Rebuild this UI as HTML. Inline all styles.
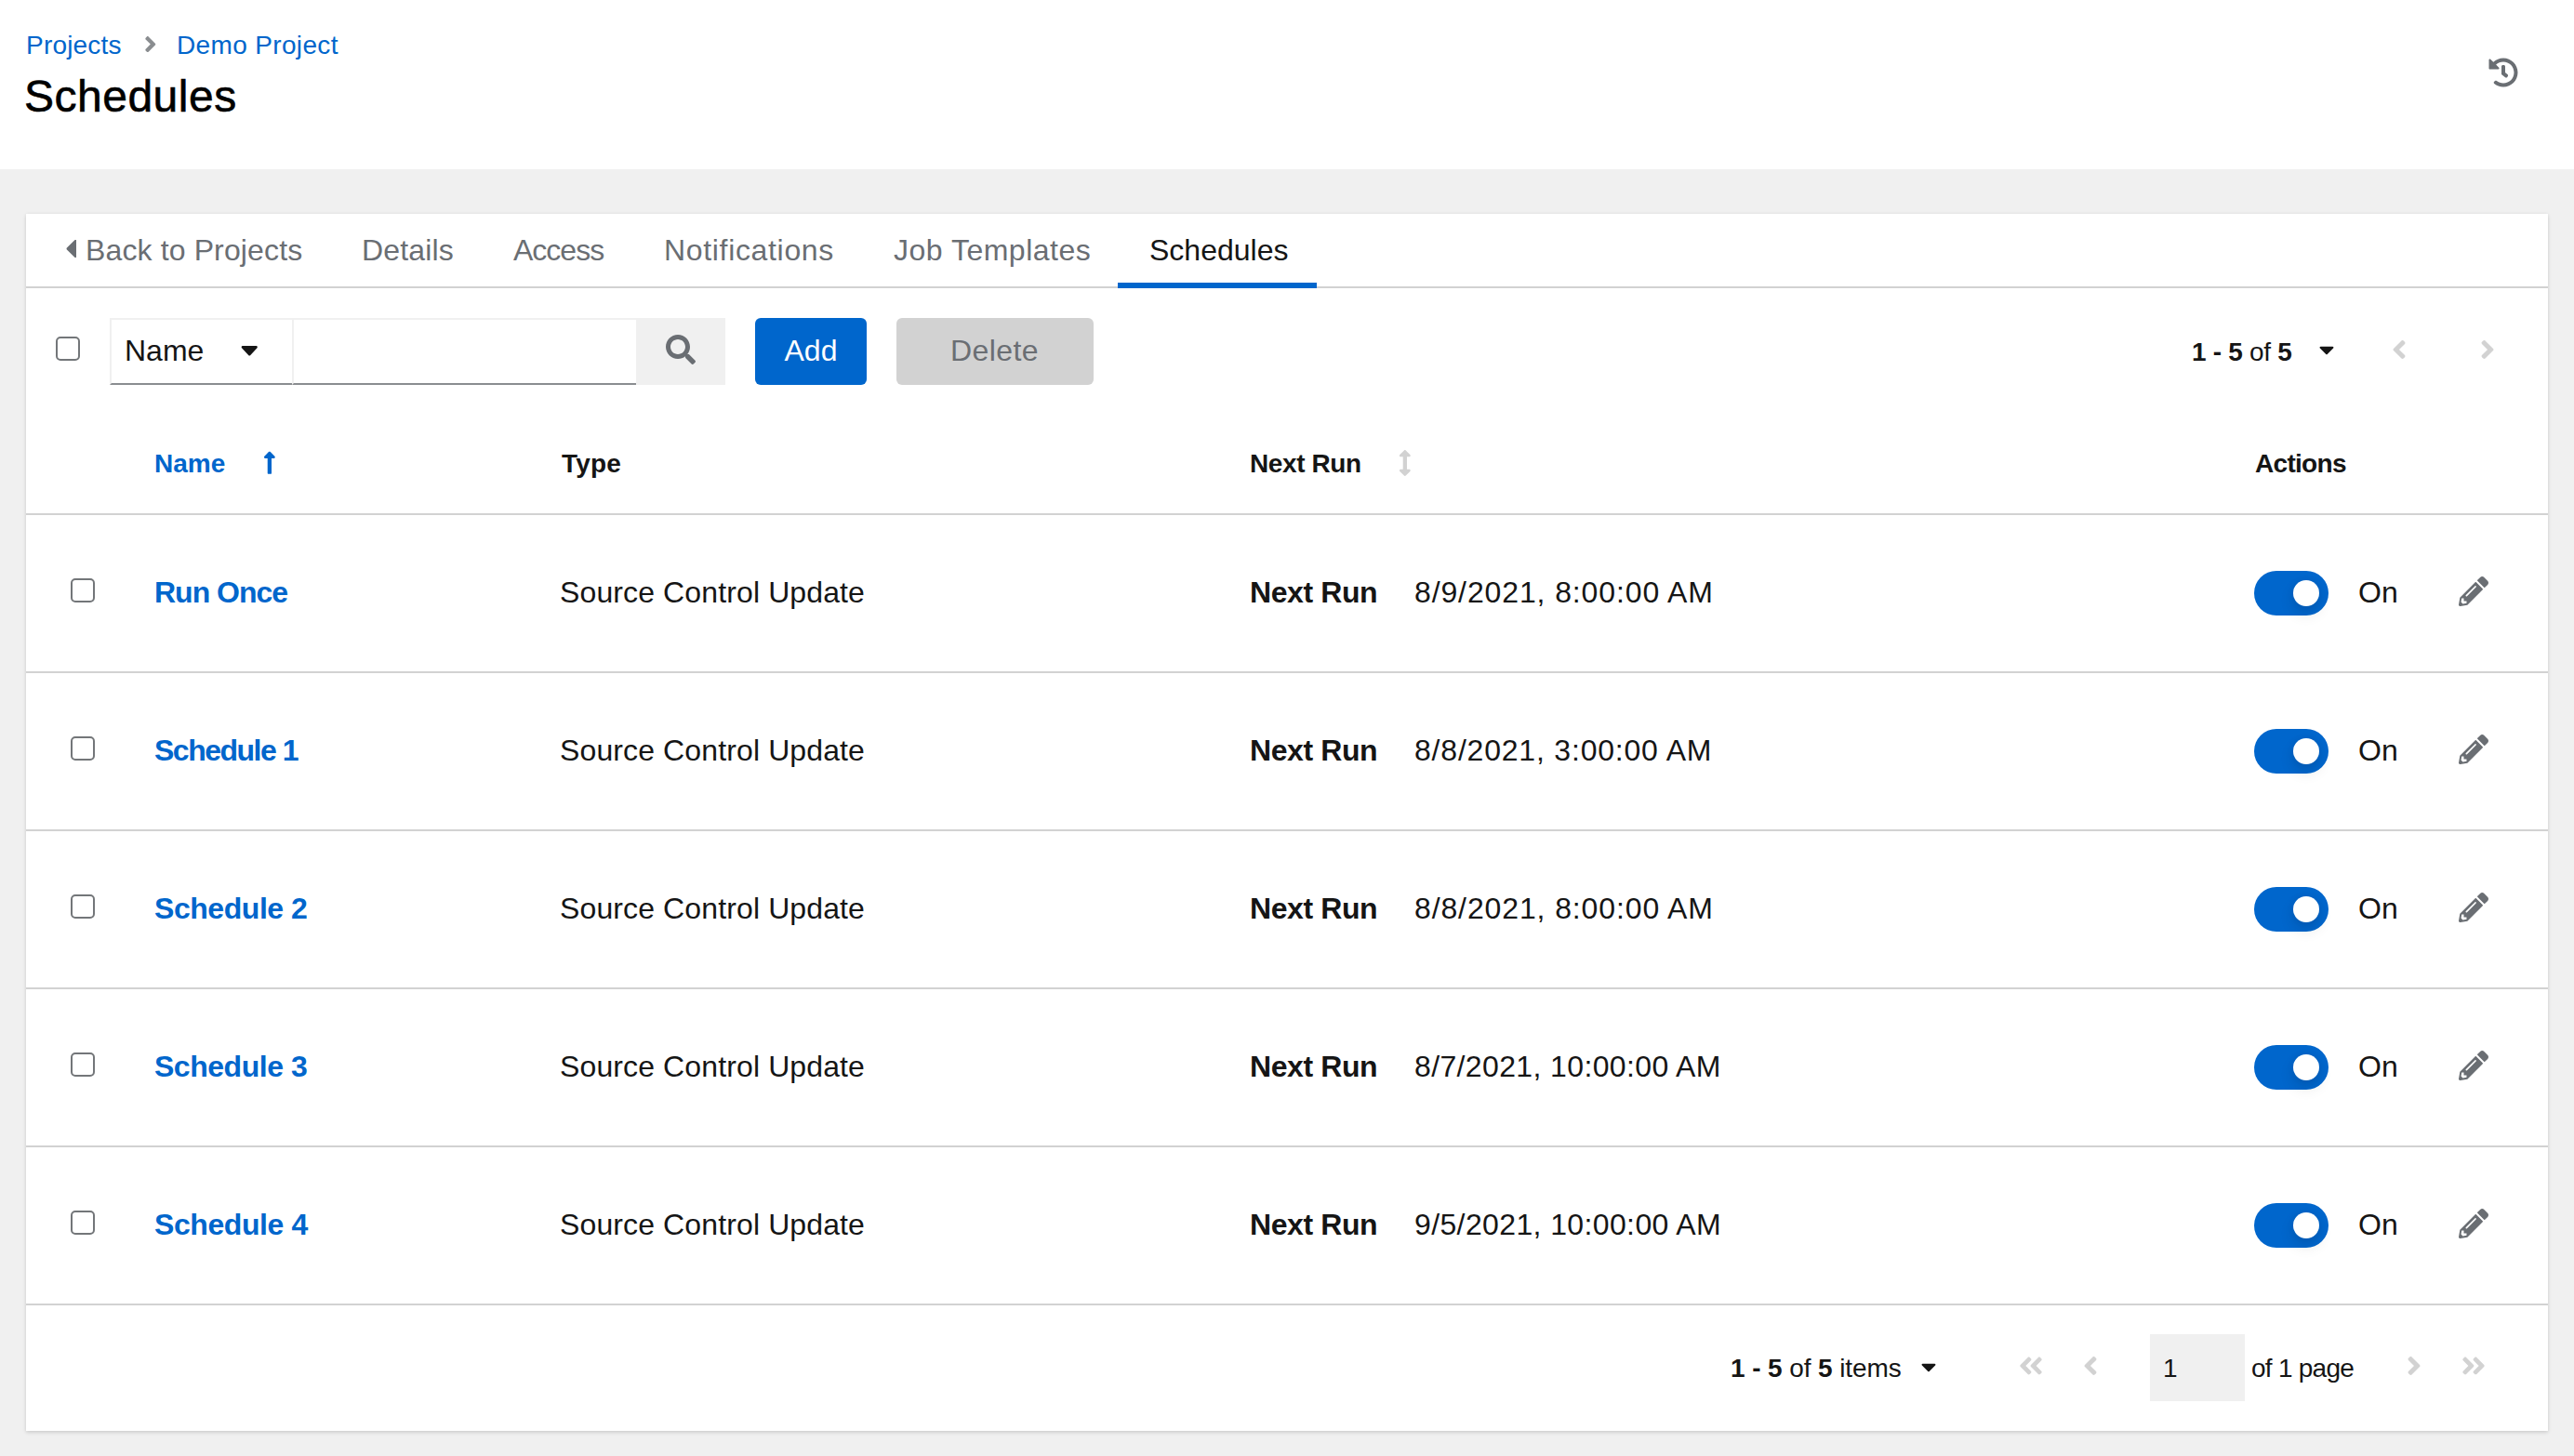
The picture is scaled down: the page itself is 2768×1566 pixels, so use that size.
<!DOCTYPE html>
<html>
<head>
<meta charset="utf-8">
<style>
html,body{margin:0;padding:0;}
body{width:2768px;height:1566px;overflow:hidden;background:#f0f0f0;position:relative;font-family:"Liberation Sans",sans-serif;color:#151515;}
.a{position:absolute;}
.t{position:absolute;white-space:nowrap;line-height:1;}
.s28{font-size:28px;}
.s32{font-size:32px;}
.b{font-weight:700;}
.blue{color:#0066cc;}
.gray{color:#6a6e73;}
svg{position:absolute;display:block;}
#hdr{left:0;top:0;width:2768px;height:182px;background:#fff;}
#card{left:28px;top:230px;width:2712px;height:1309px;background:#fff;box-shadow:0 2px 4px 0 rgba(3,3,3,.12),0 0 4px 0 rgba(3,3,3,.06);}
.hl{position:absolute;left:28px;width:2712px;height:2px;background:#d2d2d2;}
.cb{position:absolute;width:22px;height:22px;border:2px solid #737679;border-radius:5px;background:#fff;}
.tog{position:absolute;width:80px;height:48px;border-radius:24px;background:#0066cc;}
.tog::after{content:"";position:absolute;left:42px;top:10px;width:28px;height:28px;border-radius:50%;background:#fff;box-shadow:0 8px 16px 0 rgba(3,3,3,.12),0 0 8px 0 rgba(3,3,3,.06);}
</style>
</head>
<body>
<div id="hdr" class="a"></div>

<!-- breadcrumb -->
<div class="t s28 blue" style="left:28px;top:34.5px;letter-spacing:0.2px;">Projects</div>
<svg style="left:155px;top:34px;" width="13.6" height="27.2" viewBox="0 0 256 512"><path fill="#8a8d90" d="M224.3 273l-136 136c-9.4 9.4-24.6 9.4-33.9 0l-22.6-22.6c-9.4-9.4-9.4-24.6 0-33.9l96.4-96.4-96.4-96.4c-9.4-9.4-9.4-24.6 0-33.9L54.3 103c9.4-9.4 24.6-9.4 33.9 0l136 136c9.5 9.4 9.5 24.6.1 34z"/></svg>
<div class="t s28 blue" style="left:190px;top:34.5px;letter-spacing:0.35px;">Demo Project</div>
<div class="t" style="left:26px;top:80px;font-size:48px;letter-spacing:0.5px;color:#000;-webkit-text-stroke:0.6px #000;">Schedules</div>

<!-- history icon -->
<svg style="left:2676px;top:62px;" width="32" height="32" viewBox="0 0 512 512"><path fill="#6a6e73" d="M504 255.531c.253 136.64-111.18 248.372-247.82 248.468-59.015.042-113.223-20.53-155.822-54.911-11.077-8.94-11.905-25.541-1.839-35.607l11.267-11.267c8.609-8.609 22.353-9.551 31.891-1.984C173.062 425.135 212.781 440 256 440c101.705 0 184-82.311 184-184 0-101.705-82.311-184-184-184-48.814 0-93.149 18.969-126.068 49.932l50.754 50.754c10.08 10.08 2.941 27.314-11.313 27.314H24c-8.837 0-16-7.163-16-16V38.627c0-14.254 17.234-21.393 27.314-11.314l49.372 49.372C129.209 34.136 189.552 8 256 8c136.81 0 247.747 110.78 248 247.531zm-180.912 78.784l9.823-12.63c8.138-10.463 6.253-25.542-4.21-33.679L288 256.349V152c0-13.255-10.745-24-24-24h-16c-13.255 0-24 10.745-24 24v135.651l65.409 50.874c10.463 8.137 25.541 6.253 33.679-4.21z"/></svg>

<div id="card" class="a"></div>

<!-- tabs -->
<svg style="left:69.5px;top:251.3px;" width="12.5" height="33" viewBox="0 0 192 512" preserveAspectRatio="none"><path fill="#6a6e73" d="M192 127.338v257.324c0 17.818-21.543 26.741-34.142 14.142L29.196 270.142c-7.81-7.81-7.81-20.474 0-28.284l128.662-128.662c12.599-12.6 34.142-3.676 34.142 14.142z"/></svg>
<div class="t s32 gray" style="left:92px;top:253px;letter-spacing:0.13px;">Back to Projects</div>
<div class="t s32 gray" style="left:389px;top:253px;letter-spacing:0.15px;">Details</div>
<div class="t s32 gray" style="left:552px;top:253px;letter-spacing:-1px;">Access</div>
<div class="t s32 gray" style="left:714px;top:253px;letter-spacing:0.67px;">Notifications</div>
<div class="t s32 gray" style="left:961px;top:253px;letter-spacing:0.5px;">Job Templates</div>
<div class="t s32" style="left:1236px;top:253px;">Schedules</div>
<div class="hl" style="top:308px;"></div>
<div class="a" style="left:1202px;top:304px;width:214px;height:6px;background:#0066cc;"></div>

<!-- toolbar -->
<div class="cb" style="left:60px;top:362px;"></div>
<div class="a" style="left:118px;top:342px;width:196px;height:70px;border-top:2px solid #f0f0f0;border-left:2px solid #f0f0f0;border-bottom:2px solid #8a8d90;box-sizing:border-box;height:72px;"></div>
<div class="a" style="left:314px;top:342px;width:370px;height:72px;border-top:2px solid #f0f0f0;border-left:2px solid #f0f0f0;border-bottom:2px solid #8a8d90;box-sizing:border-box;"></div>
<div class="t s32" style="left:134px;top:361px;">Name</div>
<svg style="left:259px;top:360px;" width="18.5" height="32" preserveAspectRatio="none" viewBox="0 0 320 512"><path fill="#151515" d="M31.3 192h257.3c17.8 0 26.7 21.5 14.1 34.1L174.1 354.8c-7.8 7.8-20.5 7.8-28.3 0L17.2 226.1C4.6 213.5 13.5 192 31.3 192z"/></svg>
<div class="a" style="left:684px;top:342px;width:96px;height:72px;background:#f0f0f0;"></div>
<svg style="left:716px;top:360px;" width="32" height="32" viewBox="0 0 512 512"><path fill="#6a6e73" d="M505 442.7L405.3 343c-4.5-4.5-10.6-7-17-7H372c27.6-35.3 44-79.7 44-128C416 93.1 322.9 0 208 0S0 93.1 0 208s93.1 208 208 208c48.3 0 92.7-16.4 128-44v16.3c0 6.4 2.5 12.5 7 17l99.7 99.7c9.4 9.4 24.6 9.4 33.9 0l28.3-28.3c9.4-9.4 9.4-24.6.1-34zM208 336c-70.7 0-128-57.2-128-128 0-70.7 57.2-128 128-128 70.7 0 128 57.2 128 128 0 70.7-57.2 128-128 128z"/></svg>
<div class="a" style="left:812px;top:342px;width:120px;height:72px;background:#0066cc;border-radius:6px;"></div>
<div class="t s32" style="left:843.5px;top:361px;color:#fff;">Add</div>
<div class="a" style="left:964px;top:342px;width:212px;height:72px;background:#d2d2d2;border-radius:6px;"></div>
<div class="t s32 gray" style="left:1022px;top:361px;letter-spacing:0.4px;">Delete</div>

<!-- top pagination -->
<div class="t s28" style="left:2357px;top:365px;letter-spacing:-0.3px;"><span class="b">1 - 5</span> of <span class="b">5</span></div>
<svg style="left:2494px;top:363px;" width="16" height="26" viewBox="0 0 320 512"><path fill="#151515" d="M31.3 192h257.3c17.8 0 26.7 21.5 14.1 34.1L174.1 354.8c-7.8 7.8-20.5 7.8-28.3 0L17.2 226.1C4.6 213.5 13.5 192 31.3 192z"/></svg>
<svg style="left:2571.5px;top:360px;" width="16" height="32" viewBox="0 0 256 512"><path fill="#d2d2d2" d="M31.7 239l136-136c9.4-9.4 24.6-9.4 33.9 0l22.6 22.6c9.4 9.4 9.4 24.6 0 33.9L127.9 256l96.4 96.4c9.4 9.4 9.4 24.6 0 33.9L201.7 409c-9.4 9.4-24.6 9.4-33.9 0l-136-136c-9.5-9.4-9.5-24.6-.1-34z"/></svg>
<svg style="left:2667.3px;top:360px;" width="16" height="32" viewBox="0 0 256 512"><path fill="#d2d2d2" d="M224.3 273l-136 136c-9.4 9.4-24.6 9.4-33.9 0l-22.6-22.6c-9.4-9.4-9.4-24.6 0-33.9l96.4-96.4-96.4-96.4c-9.4-9.4-9.4-24.6 0-33.9L54.3 103c9.4-9.4 24.6-9.4 33.9 0l136 136c9.5 9.4 9.5 24.6.1 34z"/></svg>

<!-- table header -->
<div class="t s28 b blue" style="left:166px;top:485px;">Name</div>
<svg style="left:283.1px;top:484.3px;" width="13.75" height="27.4" viewBox="0 0 256 512" preserveAspectRatio="none"><path fill="#0066cc" d="M88 166.059V468c0 6.627 5.373 12 12 12h56c6.627 0 12-5.373 12-12V166.059h46.059c21.382 0 32.09-25.851 16.971-40.971l-86.059-86.059c-9.373-9.373-24.569-9.373-33.941 0l-86.059 86.059c-15.119 15.119-4.411 40.971 16.971 40.971H88z"/></svg>
<div class="t s28 b" style="left:604px;top:485px;letter-spacing:0.2px;">Type</div>
<div class="t s28 b" style="left:1344px;top:485px;letter-spacing:-0.4px;">Next Run</div>
<svg style="left:1503.7px;top:484px;" width="13.7" height="28" viewBox="0 0 256 512" preserveAspectRatio="none"><path fill="#d2d2d2" d="M214.059 377.941H168V134.059h46.059c21.382 0 32.09-25.851 16.971-40.971L144.971 7.029c-9.373-9.373-24.568-9.373-33.941 0L24.971 93.088c-15.119 15.119-4.411 40.971 16.971 40.971H88v243.882H41.941c-21.382 0-32.09 25.851-16.971 40.971l86.059 86.059c9.373 9.373 24.568 9.373 33.941 0l86.059-86.059c15.12-15.119 4.412-40.971-16.97-40.971z"/></svg>
<div class="t s28 b" style="left:2425px;top:485px;letter-spacing:-0.7px;">Actions</div>
<div class="hl" style="top:552px;"></div>

<!-- ROWS -->
<div class="cb" style="left:76px;top:622px;"></div>
<div class="t s32 b blue" style="left:166px;top:621px;letter-spacing:-1px;">Run Once</div>
<div class="t s32" style="left:602px;top:621px;letter-spacing:0.12px;">Source Control Update</div>
<div class="t s32 b" style="left:1344px;top:621px;letter-spacing:-0.4px;">Next Run</div>
<div class="t s32" style="left:1521px;top:621px;letter-spacing:0.88px;">8/9/2021, 8:00:00 AM</div>
<div class="tog" style="left:2424px;top:614px;"></div>
<div class="t s32" style="left:2536px;top:621px;">On</div>
<svg style="left:2644px;top:620px;" width="32" height="32" viewBox="0 0 512 512"><path fill="#6a6e73" d="M497.9 142.1l-46.1 46.1c-4.7 4.7-12.3 4.7-17 0l-111-111c-4.7-4.7-4.7-12.3 0-17l46.1-46.1c18.7-18.7 49.1-18.7 67.9 0l60.1 60.1c18.8 18.7 18.8 49.1 0 67.9zM284.2 99.8L21.6 362.4.4 483.9c-2.9 16.4 11.4 30.6 27.8 27.8l121.5-21.3 262.6-262.6c4.7-4.7 4.7-12.3 0-17l-111-111c-4.8-4.7-12.4-4.7-17.1 0zM124.1 339.9c-5.5-5.5-5.5-14.3 0-19.8l154-154c5.5-5.5 14.3-5.5 19.8 0s5.5 14.3 0 19.8l-154 154c-5.5 5.5-14.3 5.5-19.8 0zM88 424h48v36.3l-64.5 11.3-31.1-31.1L51.7 376H88v48z"/></svg>
<div class="hl" style="top:722px;"></div>
<div class="cb" style="left:76px;top:792px;"></div>
<div class="t s32 b blue" style="left:166px;top:791px;letter-spacing:-1.5px;">Schedule 1</div>
<div class="t s32" style="left:602px;top:791px;letter-spacing:0.12px;">Source Control Update</div>
<div class="t s32 b" style="left:1344px;top:791px;letter-spacing:-0.4px;">Next Run</div>
<div class="t s32" style="left:1521px;top:791px;letter-spacing:0.8px;">8/8/2021, 3:00:00 AM</div>
<div class="tog" style="left:2424px;top:784px;"></div>
<div class="t s32" style="left:2536px;top:791px;">On</div>
<svg style="left:2644px;top:790px;" width="32" height="32" viewBox="0 0 512 512"><path fill="#6a6e73" d="M497.9 142.1l-46.1 46.1c-4.7 4.7-12.3 4.7-17 0l-111-111c-4.7-4.7-4.7-12.3 0-17l46.1-46.1c18.7-18.7 49.1-18.7 67.9 0l60.1 60.1c18.8 18.7 18.8 49.1 0 67.9zM284.2 99.8L21.6 362.4.4 483.9c-2.9 16.4 11.4 30.6 27.8 27.8l121.5-21.3 262.6-262.6c4.7-4.7 4.7-12.3 0-17l-111-111c-4.8-4.7-12.4-4.7-17.1 0zM124.1 339.9c-5.5-5.5-5.5-14.3 0-19.8l154-154c5.5-5.5 14.3-5.5 19.8 0s5.5 14.3 0 19.8l-154 154c-5.5 5.5-14.3 5.5-19.8 0zM88 424h48v36.3l-64.5 11.3-31.1-31.1L51.7 376H88v48z"/></svg>
<div class="hl" style="top:892px;"></div>
<div class="cb" style="left:76px;top:962px;"></div>
<div class="t s32 b blue" style="left:166px;top:961px;letter-spacing:-0.45px;">Schedule 2</div>
<div class="t s32" style="left:602px;top:961px;letter-spacing:0.12px;">Source Control Update</div>
<div class="t s32 b" style="left:1344px;top:961px;letter-spacing:-0.4px;">Next Run</div>
<div class="t s32" style="left:1521px;top:961px;letter-spacing:0.88px;">8/8/2021, 8:00:00 AM</div>
<div class="tog" style="left:2424px;top:954px;"></div>
<div class="t s32" style="left:2536px;top:961px;">On</div>
<svg style="left:2644px;top:960px;" width="32" height="32" viewBox="0 0 512 512"><path fill="#6a6e73" d="M497.9 142.1l-46.1 46.1c-4.7 4.7-12.3 4.7-17 0l-111-111c-4.7-4.7-4.7-12.3 0-17l46.1-46.1c18.7-18.7 49.1-18.7 67.9 0l60.1 60.1c18.8 18.7 18.8 49.1 0 67.9zM284.2 99.8L21.6 362.4.4 483.9c-2.9 16.4 11.4 30.6 27.8 27.8l121.5-21.3 262.6-262.6c4.7-4.7 4.7-12.3 0-17l-111-111c-4.8-4.7-12.4-4.7-17.1 0zM124.1 339.9c-5.5-5.5-5.5-14.3 0-19.8l154-154c5.5-5.5 14.3-5.5 19.8 0s5.5 14.3 0 19.8l-154 154c-5.5 5.5-14.3 5.5-19.8 0zM88 424h48v36.3l-64.5 11.3-31.1-31.1L51.7 376H88v48z"/></svg>
<div class="hl" style="top:1062px;"></div>
<div class="cb" style="left:76px;top:1132px;"></div>
<div class="t s32 b blue" style="left:166px;top:1131px;letter-spacing:-0.47px;">Schedule 3</div>
<div class="t s32" style="left:602px;top:1131px;letter-spacing:0.12px;">Source Control Update</div>
<div class="t s32 b" style="left:1344px;top:1131px;letter-spacing:-0.4px;">Next Run</div>
<div class="t s32" style="left:1521px;top:1131px;letter-spacing:0.37px;">8/7/2021, 10:00:00 AM</div>
<div class="tog" style="left:2424px;top:1124px;"></div>
<div class="t s32" style="left:2536px;top:1131px;">On</div>
<svg style="left:2644px;top:1130px;" width="32" height="32" viewBox="0 0 512 512"><path fill="#6a6e73" d="M497.9 142.1l-46.1 46.1c-4.7 4.7-12.3 4.7-17 0l-111-111c-4.7-4.7-4.7-12.3 0-17l46.1-46.1c18.7-18.7 49.1-18.7 67.9 0l60.1 60.1c18.8 18.7 18.8 49.1 0 67.9zM284.2 99.8L21.6 362.4.4 483.9c-2.9 16.4 11.4 30.6 27.8 27.8l121.5-21.3 262.6-262.6c4.7-4.7 4.7-12.3 0-17l-111-111c-4.8-4.7-12.4-4.7-17.1 0zM124.1 339.9c-5.5-5.5-5.5-14.3 0-19.8l154-154c5.5-5.5 14.3-5.5 19.8 0s5.5 14.3 0 19.8l-154 154c-5.5 5.5-14.3 5.5-19.8 0zM88 424h48v36.3l-64.5 11.3-31.1-31.1L51.7 376H88v48z"/></svg>
<div class="hl" style="top:1232px;"></div>
<div class="cb" style="left:76px;top:1302px;"></div>
<div class="t s32 b blue" style="left:166px;top:1301px;letter-spacing:-0.42px;">Schedule 4</div>
<div class="t s32" style="left:602px;top:1301px;letter-spacing:0.12px;">Source Control Update</div>
<div class="t s32 b" style="left:1344px;top:1301px;letter-spacing:-0.4px;">Next Run</div>
<div class="t s32" style="left:1521px;top:1301px;letter-spacing:0.38px;">9/5/2021, 10:00:00 AM</div>
<div class="tog" style="left:2424px;top:1294px;"></div>
<div class="t s32" style="left:2536px;top:1301px;">On</div>
<svg style="left:2644px;top:1300px;" width="32" height="32" viewBox="0 0 512 512"><path fill="#6a6e73" d="M497.9 142.1l-46.1 46.1c-4.7 4.7-12.3 4.7-17 0l-111-111c-4.7-4.7-4.7-12.3 0-17l46.1-46.1c18.7-18.7 49.1-18.7 67.9 0l60.1 60.1c18.8 18.7 18.8 49.1 0 67.9zM284.2 99.8L21.6 362.4.4 483.9c-2.9 16.4 11.4 30.6 27.8 27.8l121.5-21.3 262.6-262.6c4.7-4.7 4.7-12.3 0-17l-111-111c-4.8-4.7-12.4-4.7-17.1 0zM124.1 339.9c-5.5-5.5-5.5-14.3 0-19.8l154-154c5.5-5.5 14.3-5.5 19.8 0s5.5 14.3 0 19.8l-154 154c-5.5 5.5-14.3 5.5-19.8 0zM88 424h48v36.3l-64.5 11.3-31.1-31.1L51.7 376H88v48z"/></svg>
<div class="hl" style="top:1402px;"></div>
<!-- footer pagination -->
<div class="t s28" style="left:1861px;top:1458px;letter-spacing:-0.1px;"><span class="b">1 - 5</span> of <span class="b">5</span> items</div>
<svg style="left:2066px;top:1457px;" width="16" height="26" viewBox="0 0 320 512"><path fill="#151515" d="M31.3 192h257.3c17.8 0 26.7 21.5 14.1 34.1L174.1 354.8c-7.8 7.8-20.5 7.8-28.3 0L17.2 226.1C4.6 213.5 13.5 192 31.3 192z"/></svg>
<svg style="left:2170px;top:1454px;" width="28" height="30" viewBox="0 0 448 512"><path fill="#d2d2d2" d="M223.7 239l136-136c9.4-9.4 24.6-9.4 33.9 0l22.6 22.6c9.4 9.4 9.4 24.6 0 33.9L319.9 256l96.4 96.4c9.4 9.4 9.4 24.6 0 33.9L393.7 409c-9.4 9.4-24.6 9.4-33.9 0l-136-136c-9.5-9.4-9.5-24.6-.1-34zm-192 34l136 136c9.4 9.4 24.6 9.4 33.9 0l22.6-22.6c9.4-9.4 9.4-24.6 0-33.9L127.9 256l96.4-96.4c9.4-9.4 9.4-24.6 0-33.9L201.7 103c-9.4-9.4-24.6-9.4-33.9 0l-136 136c-9.5 9.4-9.5 24.6-.1 34z"/></svg>
<svg style="left:2240px;top:1453px;" width="16" height="32" viewBox="0 0 256 512"><path fill="#d2d2d2" d="M31.7 239l136-136c9.4-9.4 24.6-9.4 33.9 0l22.6 22.6c9.4 9.4 9.4 24.6 0 33.9L127.9 256l96.4 96.4c9.4 9.4 9.4 24.6 0 33.9L201.7 409c-9.4 9.4-24.6 9.4-33.9 0l-136-136c-9.5-9.4-9.5-24.6-.1-34z"/></svg>
<div class="a" style="left:2312px;top:1435px;width:102px;height:72px;background:#f0f0f0;"></div>
<div class="t s28" style="left:2326px;top:1458px;">1</div>
<div class="t s28" style="left:2421px;top:1458px;letter-spacing:-0.75px;">of 1 page</div>
<svg style="left:2588px;top:1453px;" width="16" height="32" viewBox="0 0 256 512"><path fill="#d2d2d2" d="M224.3 273l-136 136c-9.4 9.4-24.6 9.4-33.9 0l-22.6-22.6c-9.4-9.4-9.4-24.6 0-33.9l96.4-96.4-96.4-96.4c-9.4-9.4-9.4-24.6 0-33.9L54.3 103c9.4-9.4 24.6-9.4 33.9 0l136 136c9.5 9.4 9.5 24.6.1 34z"/></svg>
<svg style="left:2646px;top:1454px;" width="28" height="30" viewBox="0 0 448 512"><path fill="#d2d2d2" d="M224.3 273l-136 136c-9.4 9.4-24.6 9.4-33.9 0l-22.6-22.6c-9.4-9.4-9.4-24.6 0-33.9l96.4-96.4-96.4-96.4c-9.4-9.4-9.4-24.6 0-33.9L54.3 103c9.4-9.4 24.6-9.4 33.9 0l136 136c9.5 9.4 9.5 24.6.1 34zm192-34l-136-136c-9.4-9.4-24.6-9.4-33.9 0l-22.6 22.6c-9.4 9.4-9.4 24.6 0 33.9l96.4 96.4-96.4 96.4c-9.4 9.4-9.4 24.6 0 33.9l22.6 22.6c9.4 9.4 24.6 9.4 33.9 0l136-136c9.4-9.2 9.4-24.4 0-33.8z"/></svg>
</body>
</html>
